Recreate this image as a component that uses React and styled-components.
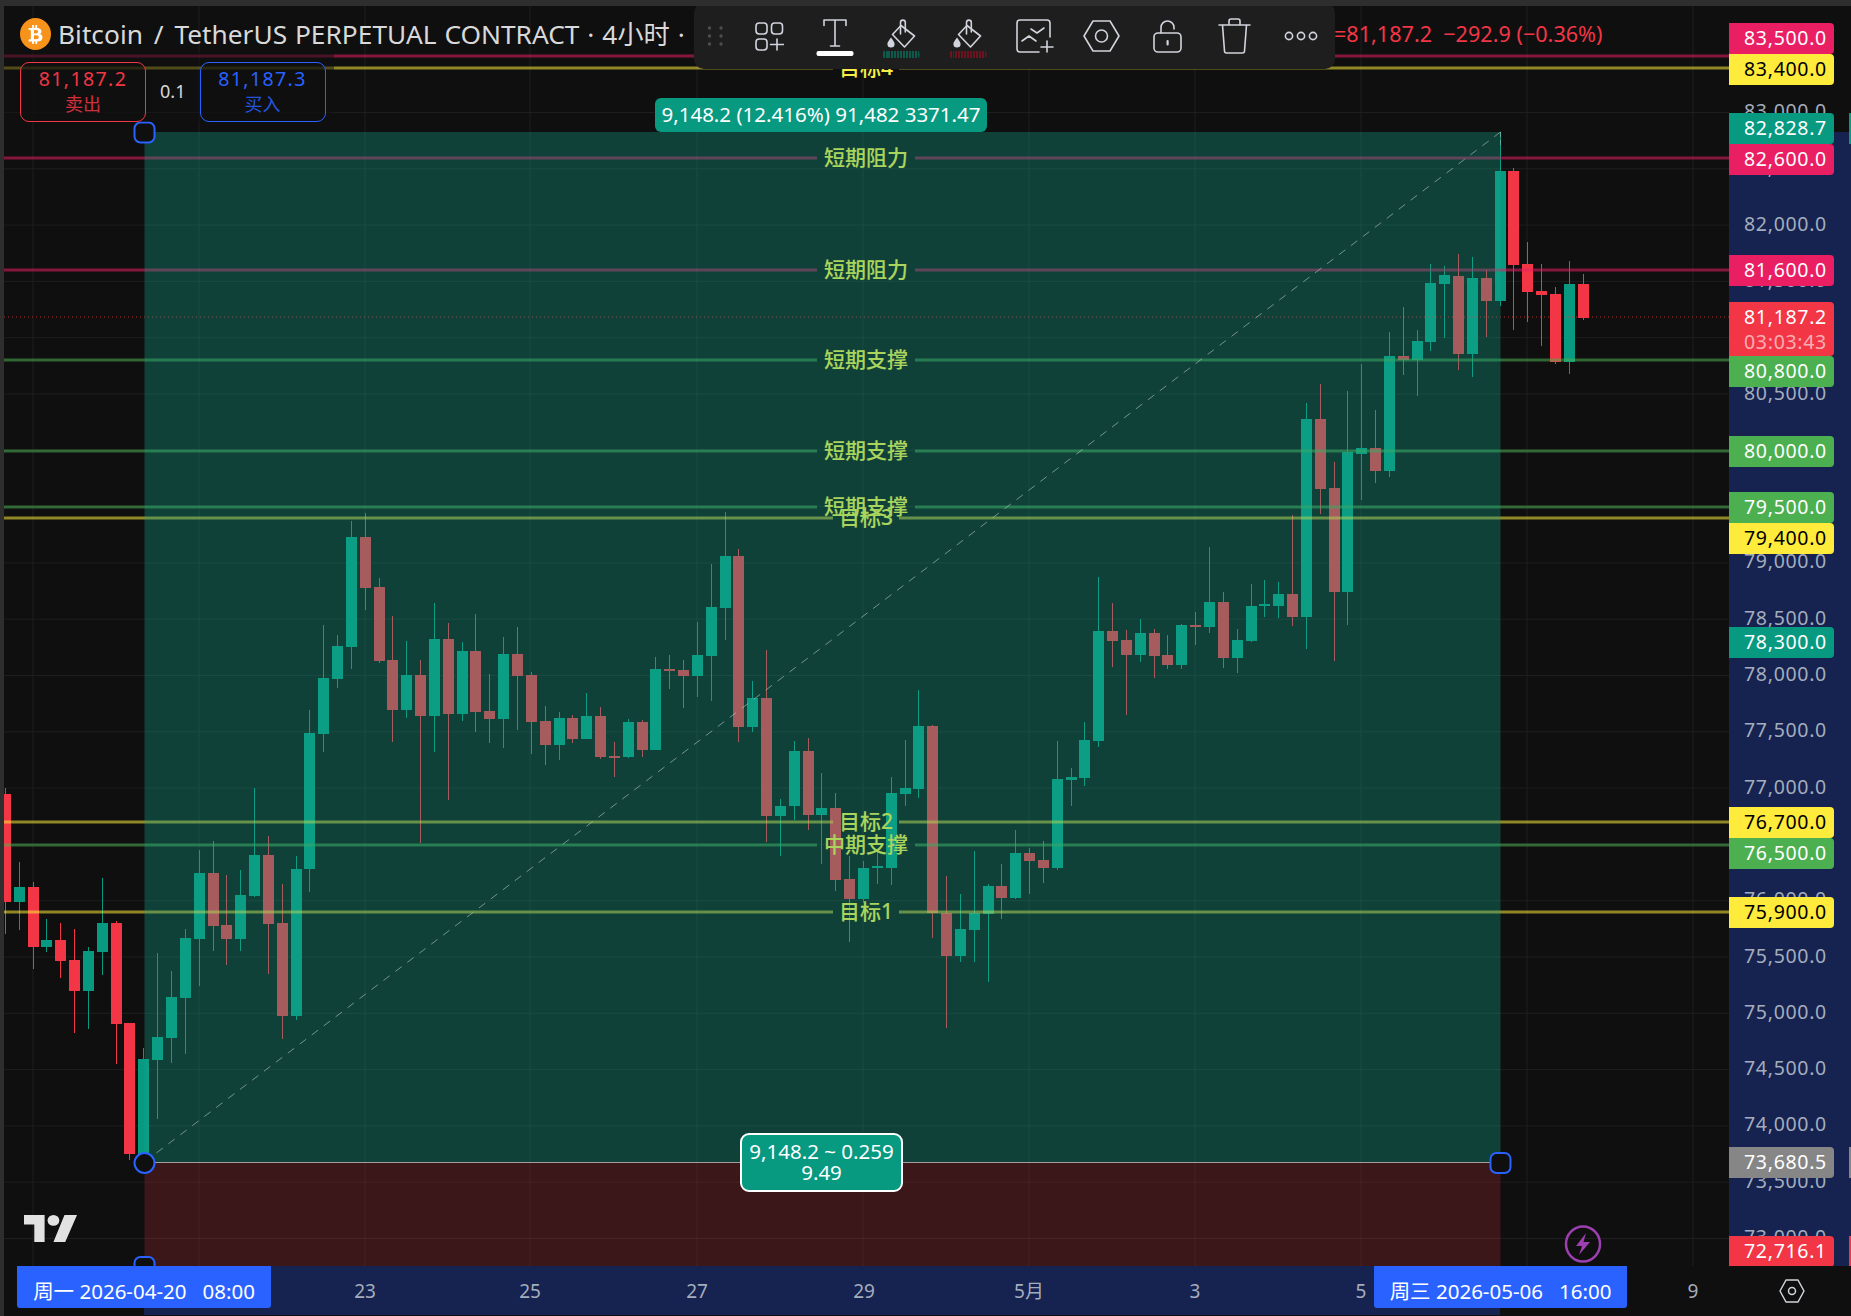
import React from "react";
import styled, { createGlobalStyle } from "styled-components";
import { FaBtc } from "react-icons/fa";

const FONT = `"Noto Sans", "Noto Sans CJK SC", sans-serif`;

const Global = createGlobalStyle`
  html, body { margin: 0; padding: 0; background: #2e2e2e; }
  body { font-family: ${FONT}; overflow: hidden; }
`;

const Screen = styled.div`
  width: 1851px;
  height: 1316px;
  padding: 6px 0 0 4px;
  box-sizing: border-box;
  background: #2e2e2e;
  display: grid;
  grid-template-columns: 1725px 122px;
  grid-template-rows: 1260px 50px;
  overflow: hidden;
  position: relative;
`;

const ChartPane = styled.div`
  position: relative;
  background: #0f0f0f;
  overflow: hidden;
`;

const ChartSvg = styled.svg`
  display: block;
  width: 1725px;
  height: 1260px;
`;

/* legend */
const Legend = styled.div`
  position: absolute;
  left: 0;
  top: 0;
  display: flex;
  flex-direction: column;
`;

const TitleRow = styled.div`
  display: flex;
  align-items: center;
  height: 32px;
  margin-top: 12px;
  padding-left: 16px;
  white-space: nowrap;
`;

const CoinLogo = styled.span`
  width: 31px;
  height: 32px;
  border-radius: 50%;
  background: #f7931a;
  color: #fff;
  display: flex;
  align-items: center;
  justify-content: center;
  font-size: 19px;
  flex: none;
`;

const Title = styled.span`
  margin-left: 7px;
  font-size: 26.3px;
  line-height: 32px;
  word-spacing: 1px;
  color: #d9d9d9;
  flex: none;
`;

const Slash = styled.span`
  margin: 0 3px;
`;

const Values = styled.span`
  position: absolute;
  left: 1330px;
  font-size: 21.6px;
  line-height: 32px;
  color: #f23645;
  white-space: pre;
`;

const TradeRow = styled.div`
  display: flex;
  align-items: flex-start;
  width: 330px;
  box-sizing: border-box;
  padding: 12px 0 0 16px;
  background: rgba(15, 15, 15, 0.5);
`;

const TradeBox = styled.div`
  width: 126px;
  height: 60px;
  box-sizing: border-box;
  border: 1px solid ${(p) => p.$color};
  border-radius: 9px;
  color: ${(p) => p.$color};
  text-align: center;
  flex: none;
  background: rgba(15, 15, 15, 0.6);
`;

const TradePrice = styled.div`
  font-size: 19.5px;
  line-height: 26px;
  letter-spacing: 1.4px;
  margin-top: 3px;
`;

const TradeSide = styled.div`
  font-size: 18px;
  line-height: 25px;
  opacity: 0.85;
`;

const Spread = styled.div`
  width: 53.5px;
  height: 60px;
  line-height: 58px;
  text-align: center;
  font-size: 18px;
  color: #d8d8d8;
  flex: none;
`;

/* floating toolbar */
const Toolbar = styled.div`
  position: absolute;
  left: 690px;
  top: -3px;
  width: 641px;
  height: 66px;
  display: flex;
  align-items: stretch;
  background: #1e1e1e;
  border-radius: 10px;
  color: #d1d4dc;
`;

const DragHandle = styled.div`
  width: 42px;
  flex: none;
  display: flex;
  align-items: center;
  justify-content: center;
  color: #4e4e4e;
`;

const ToolButton = styled.div`
  width: ${(p) => p.$w || 66}px;
  flex: none;
  position: relative;
  display: flex;
  align-items: center;
  justify-content: center;
`;

const IconLift = styled.div`
  display: flex;
  transform: translateY(${(p) => p.$lift || 0}px);
`;

const Swatch = styled.div`
  position: absolute;
  left: 50%;
  top: 48px;
  width: 37px;
  height: ${(p) => (p.$solid ? 5 : 7)}px;
  transform: translateX(-50%);
  border-radius: 2px;
  background: ${(p) =>
    p.$solid
      ? p.$color
      : `repeating-linear-gradient(90deg, ${p.$color} 0 2px, #1e1e1e 2px 3px)`};
`;

const Ic = { fill: "none", stroke: "currentColor", strokeWidth: 1.6, strokeLinecap: "round", strokeLinejoin: "round" };

const DragIcon = () => (
  <svg width="15" height="20" viewBox="0 0 15 20" fill="currentColor">
    {[1.5, 13].map((x) => [2, 10, 18].map((y) => <circle key={`${x}${y}`} cx={x} cy={y} r="1.7" />))}
  </svg>
);
const AddGrid = () => (
  <svg width="29" height="29" viewBox="0 0 29 29" {...Ic}>
    <rect x="1" y="1" width="11" height="11" rx="3.2" />
    <rect x="16.5" y="1" width="11" height="11" rx="3.2" />
    <rect x="1" y="17" width="11" height="11" rx="3.2" />
    <path d="M15.5 22.5h13M22 17v11" />
  </svg>
);
const TextTool = () => (
  <svg width="24" height="28" viewBox="0 0 24 28" {...Ic}>
    <path d="M1 6.500V1h22v5.500M12 1v26M7.500 27h9" />
  </svg>
);
const Bucket = () => (
  <svg width="29" height="29" viewBox="0 0 29 29" {...Ic}>
    <path d="M14 6.500 27.500 17 17.500 28 5.500 15.500Z" />
    <path d="M13.500 15V3.500a2.400 2.400 0 0 1 4.800 0V13" />
    <path d="M4 18.500C1.500 22 .4 23.500 .4 25a3.600 3.600 0 0 0 7.200 0C7.600 23.500 6.500 22 4 18.500Z" fill="currentColor" stroke="none" />
  </svg>
);
const TemplateAdd = () => (
  <svg width="38" height="34" viewBox="0 0 38 34" {...Ic}>
    <path d="M34 18V4a3 3 0 0 0-3-3H4a3 3 0 0 0-3 3v26a3 3 0 0 0 3 3h19" />
    <path d="M15 10l6 4 7-5M6 22l7-5 7 5M25 28h12M31 22v11" />
  </svg>
);
const Hexagon = () => (
  <svg width="37" height="32" viewBox="0 0 37 32" {...Ic}>
    <path d="M10 1h17l9 15-9 15H10L1 16Z" />
    <circle cx="18.500" cy="16" r="6" />
  </svg>
);
const LockOpen = () => (
  <svg width="29" height="33" viewBox="0 0 29 33" {...Ic}>
    <rect x="1" y="13" width="27" height="19" rx="4" />
    <path d="M8 13V7.500a6.500 6.500 0 0 1 13 0V9" />
    <rect x="13.500" y="20" width="2.200" height="5.500" rx="1" fill="currentColor" stroke="none" />
  </svg>
);
const Trash = () => (
  <svg width="33" height="36" viewBox="0 0 33 36" {...Ic}>
    <path d="M1 7h31M11 7V3a2 2 0 0 1 2-2h7a2 2 0 0 1 2 2v4M4.500 7l2 26a2 2 0 0 0 2 2h16a2 2 0 0 0 2-2l2-26" />
  </svg>
);
const Dots = () => (
  <svg width="34" height="10" viewBox="0 0 34 10" {...Ic}>
    <circle cx="5" cy="5" r="3.600" />
    <circle cx="17" cy="5" r="3.600" />
    <circle cx="29" cy="5" r="3.600" />
  </svg>
);

/* measure labels */
const MeasureTag = styled.div`
  position: absolute;
  left: 651px;
  top: 92px;
  width: 332px;
  height: 34px;
  line-height: 32px;
  text-align: center;
  background: #089981;
  border-radius: 6px;
  color: #fff;
  font-size: 20.5px;
  white-space: nowrap;
`;

const StatTag = styled.div`
  position: absolute;
  left: 736px;
  top: 1127px;
  width: 163px;
  height: 59px;
  box-sizing: border-box;
  background: #089981;
  border: 2px solid #fff;
  border-radius: 9px;
  color: #fff;
  font-size: 20.5px;
  line-height: 21px;
  text-align: center;
  padding-top: 6px;
  white-space: nowrap;
`;

const Bolt = styled.svg`
  position: absolute;
  left: 1557px;
  top: 1214px;
`;

const Wordmark = styled.svg`
  position: absolute;
  left: 20px;
  top: 1209px;
`;

/* price axis */
const PriceAxis = styled.div`
  position: relative;
  background: #0f0f0f;
  overflow: hidden;
`;

const AxisBand = styled.div`
  position: absolute;
  left: 0;
  right: 0;
  top: 126px;
  bottom: 0;
  background: #16224f;
`;

const PriceTick = styled.div`
  position: absolute;
  left: 15px;
  font-size: 19.5px;
  line-height: 26px;
  letter-spacing: 0.7px;
  color: #a3adbd;
  white-space: nowrap;
`;

const PriceTag = styled.div`
  position: absolute;
  left: 0;
  width: 105px;
  padding: ${(p) => (p.$two ? "2px" : "0")} 0 0 15px;
  box-sizing: border-box;
  height: ${(p) => (p.$two ? 54 : 31)}px;
  border-radius: 0 4px 4px 0;
  background: ${(p) => p.$bg};
  color: ${(p) => p.$fg || "#fff"};
  font-size: 19.5px;
  line-height: ${(p) => (p.$two ? 25 : 29)}px;
  letter-spacing: 0.7px;
  white-space: nowrap;
  ${(p) =>
    p.$edge
      ? `&::after { content: ""; position: absolute; left: 120px; top: 0; bottom: 0; width: 4px; background: ${p.$bg}; }`
      : ""}
`;

const TagSub = styled.div`
  color: rgba(255, 255, 255, 0.6);
`;

/* time axis */
const TimeAxis = styled.div`
  position: relative;
  background: #0f0f0f;
  height: 50px;
  overflow: hidden;
`;

const TimeBand = styled.div`
  position: absolute;
  left: 140px;
  width: 1356px;
  top: 0;
  height: 49px;
  background: #16224f;
`;

const TimeTick = styled.div`
  position: absolute;
  top: 0;
  width: 60px;
  margin-left: -30px;
  text-align: center;
  font-size: 19px;
  line-height: 50px;
  color: #a3adbd;
`;

const DateTag = styled.div`
  position: absolute;
  top: 0;
  width: ${(p) => p.$w}px;
  height: 42px;
  line-height: 50px;
  text-align: center;
  background: #2962ff;
  border-radius: 0 0 3px 3px;
  color: #fff;
  font-size: 20.5px;
  white-space: pre;
`;

const Corner = styled.div`
  background: #0f0f0f;
  display: flex;
  align-items: center;
  color: #d1d4dc;
  padding-left: 50px;
`;

/* data: colour, body top, body bottom, wick top, wick bottom (px on the page) */
const C = [
  ["r",794,902,788,934],["g",887,902,862,930],["r",887,947,882,969],["g",940,947,919,952],["r",940,961,923,978],
  ["r",960,991,929,1033],["g",951,991,947,1029],["g",923,952,878,975],["r",923,1024,921,1064],["r",1023,1154,1023,1160],
  ["g",1059,1160,1048,1162],["g",1037,1060,953,1119],["g",997,1038,971,1063],["g",938,998,929,1054],["g",873,939,850,986],
  ["r",873,926,841,951],["r",925,939,875,965],["g",895,939,870,951],["g",855,896,788,897],["r",855,924,836,974],
  ["r",923,1016,884,1039],["g",869,1016,856,1020],["g",733,869,710,892],["g",678,734,625,752],["g",646,679,635,688],
  ["g",537,647,521,669],["r",537,588,513,610],["r",587,661,578,663],["r",660,710,616,742],["g",675,710,641,718],
  ["r",675,716,660,843],["g",639,716,603,752],["r",639,714,623,800],["g",651,714,642,721],["r",651,712,614,732],
  ["r",711,719,674,743],["g",654,719,637,748],["r",654,676,627,730],["r",675,722,672,754],["r",721,745,706,765],
  ["g",718,745,712,760],["r",718,739,715,743],["g",716,739,693,739],["r",716,757,707,759],["r",756,758,742,777],
  ["g",722,757,719,758],["r",722,750,720,757],["g",669,750,657,750],["r",669,671,655,689],["r",670,676,660,708],
  ["g",655,676,622,697],["g",607,656,564,701],["g",556,608,512,640],["r",556,727,549,742],["g",698,727,681,732],
  ["r",698,816,650,842],["g",806,816,799,856],["g",751,806,741,820],["r",751,815,738,830],["g",808,815,773,864],
  ["r",808,880,793,891],["r",879,899,856,942],["g",868,899,861,903],["g",866,868,851,884],["g",793,868,777,885],
  ["g",788,794,740,806],["g",726,789,690,798],["r",726,913,725,938],["r",913,956,876,1028],["g",929,956,894,962],
  ["g",913,930,851,962],["g",886,914,884,982],["r",886,898,864,919],["g",853,898,830,899],["r",853,861,848,894],
  ["r",860,868,841,883],["g",779,868,741,870],["g",777,780,768,806],["g",740,778,722,786],["g",631,741,577,747],
  ["r",631,641,603,667],["r",640,655,630,715],["g",633,655,619,662],["r",633,656,629,678],["r",655,665,635,669],
  ["g",625,665,624,669],["r",625,627,612,645],["g",602,627,547,633],["r",602,658,592,668],["g",640,658,629,673],
  ["g",606,641,584,642],["g",604,606,580,617],["g",594,606,582,618],["r",594,617,515,626],["g",419,617,403,649],
  ["r",419,489,384,514],["r",488,592,462,661],["g",452,592,391,625],["g",448,454,364,500],["r",448,471,410,483],
  ["g",356,471,332,477],["r",356,360,307,375],["g",341,360,330,396],["g",283,342,264,351],["g",275,284,266,338],
  ["r",276,354,254,370],["g",278,354,257,377],["r",278,301,270,337],["g",171,301,132,306],["r",171,265,168,330],
  ["r",264,292,242,322],["r",291,295,264,346],["r",294,362,287,364],["g",284,362,261,374],["r",284,318,274,320],
];

const LINES = [
  { y: 56, c: "#e91e63", t: "短期阻力" },
  { y: 68, c: "#ffeb3b", t: "目标4", short: true },
  { y: 158, c: "#e91e63", t: "短期阻力" },
  { y: 270, c: "#e91e63", t: "短期阻力" },
  { y: 360, c: "#4caf50", t: "短期支撑" },
  { y: 451, c: "#4caf50", t: "短期支撑" },
  { y: 507, c: "#4caf50", t: "短期支撑" },
  { y: 518, c: "#ffeb3b", t: "目标3", short: true },
  { y: 822, c: "#ffeb3b", t: "目标2", short: true },
  { y: 845, c: "#4caf50", t: "中期支撑" },
  { y: 912, c: "#ffeb3b", t: "目标1", short: true },
];

const GRID_X = [33, 199, 365, 530, 697, 863, 1029, 1195, 1361, 1527, 1693];
const gridY = (k) => 112.5 + 56.3 * k;

const TICKS = ["83,000.0","82,500.0","82,000.0","81,500.0","81,000.0","80,500.0","80,000.0","79,500.0","79,000.0","78,500.0","78,000.0","77,500.0","77,000.0","76,500.0","76,000.0","75,500.0","75,000.0","74,500.0","74,000.0","73,500.0","73,000.0"];

const TAGS = [
  { p: "83,500.0", top: 23, bg: "#e91e63" },
  { p: "83,400.0", top: 54, bg: "#ffeb3b", fg: "#000" },
  { p: "82,828.7", top: 113, bg: "#089981", edge: true },
  { p: "82,600.0", top: 144, bg: "#e91e63" },
  { p: "81,600.0", top: 255, bg: "#e91e63" },
  { p: "80,800.0", top: 356, bg: "#4caf50" },
  { p: "80,000.0", top: 436, bg: "#4caf50" },
  { p: "79,500.0", top: 492, bg: "#4caf50" },
  { p: "79,400.0", top: 523, bg: "#ffeb3b", fg: "#000" },
  { p: "78,300.0", top: 627, bg: "#089981" },
  { p: "76,700.0", top: 807, bg: "#ffeb3b", fg: "#000" },
  { p: "76,500.0", top: 838, bg: "#4caf50" },
  { p: "75,900.0", top: 897, bg: "#ffeb3b", fg: "#000" },
  { p: "73,680.5", top: 1147, bg: "#868686", edge: true },
  { p: "72,716.1", top: 1236, bg: "#f23645", edge: true },
];

const TIME = [["23",365],["25",530],["27",697],["29",864],["5月",1029],["3",1195],["5",1361],["9",1693]];

const Chart = () => (
  <ChartSvg viewBox="4 6 1725 1260">
    {GRID_X.map((x) => (
      <line key={x} x1={x} x2={x} y1="6" y2="1266" stroke="#1e1e1e" />
    ))}
    {TICKS.map((_, k) => (
      <line key={k} x1="4" x2="1729" y1={gridY(k)} y2={gridY(k)} stroke="#1e1e1e" />
    ))}
    {C.map(([c, bt, bb, wt, wb], i) => {
      const x = 5.4 + 13.84 * i;
      const col = c === "r" ? "#f23645" : "#089981";
      return (
        <g key={i} fill={col} shapeRendering="crispEdges">
          <rect x={x - 0.5} y={wt} width="1" height={wb - wt} />
          <rect x={x - 5.5} y={bt} width="11" height={bb - bt} />
        </g>
      );
    })}
    <line x1="4" x2="1729" y1="317" y2="317" stroke="#f23645" strokeOpacity="0.7" strokeDasharray="1 3" />
    {LINES.map((l) => {
      const gap = l.short ? [833, 899] : [817, 915];
      return (
        <g key={l.y}>
          <line x1="4" x2={gap[0]} y1={l.y} y2={l.y} stroke={l.c} strokeOpacity="0.55" strokeWidth="3" />
          <line x1={gap[1]} x2="1729" y1={l.y} y2={l.y} stroke={l.c} strokeOpacity="0.55" strokeWidth="3" />
          <text x="866" y={l.y + 7} textAnchor="middle" fontSize="21" fontWeight="500" fill="#f6ee45" fontFamily={FONT}>
            {l.t}
          </text>
        </g>
      );
    })}
    <rect x="144.500" y="132" width="1356" height="1030.500" fill="rgb(21,165,142)" fillOpacity="0.34" />
    <rect x="144.500" y="1162.500" width="1356" height="104" fill="#f23645" fillOpacity="0.2" />
    <line x1="144.500" x2="1500.500" y1="1162.500" y2="1162.500" stroke="#a0a0a0" strokeWidth="1.200" />
    <line x1="144.500" y1="1162" x2="1500.500" y2="132" stroke="#b9c7c3" strokeOpacity="0.6" strokeDasharray="8 7" />
    <line x1="1500.500" y1="132" x2="1500.500" y2="146" stroke="#b9c7c3" strokeOpacity="0.5" strokeDasharray="5 3" />
    <rect x="134.500" y="122.500" width="20" height="20" rx="6" fill="#0f0f0f" stroke="#2962ff" strokeWidth="2" />
    <circle cx="144.500" cy="1163" r="10" fill="#0f0f0f" stroke="#2962ff" strokeWidth="2" />
    <rect x="1490.500" y="1153" width="20" height="20" rx="6" fill="#0f0f0f" stroke="#2962ff" strokeWidth="2" />
    <rect x="134.500" y="1257" width="20" height="20" rx="6" fill="#0f0f0f" stroke="#2962ff" strokeWidth="2" />
  </ChartSvg>
);

export default function App() {
  return (
    <>
      <Global />
      <Screen>
        <ChartPane>
          <Chart />
          <Legend>
            <TitleRow>
              <CoinLogo>
                <FaBtc />
              </CoinLogo>
              <Title>
                Bitcoin <Slash>/</Slash> TetherUS PERPETUAL CONTRACT · 4小时 ·
              </Title>
              <Values>{"=81,187.2  −292.9 (−0.36%)"}</Values>
            </TitleRow>
            <TradeRow>
              <TradeBox $color="#f23645">
                <TradePrice>81,187.2</TradePrice>
                <TradeSide>卖出</TradeSide>
              </TradeBox>
              <Spread>0.1</Spread>
              <TradeBox $color="#2962ff">
                <TradePrice>81,187.3</TradePrice>
                <TradeSide>买入</TradeSide>
              </TradeBox>
            </TradeRow>
          </Legend>
          <Toolbar>
            <DragHandle>
              <DragIcon />
            </DragHandle>
            <ToolButton>
              <AddGrid />
            </ToolButton>
            <ToolButton>
              <IconLift $lift={-3}>
                <TextTool />
              </IconLift>
              <Swatch $color="#fff" $solid />
            </ToolButton>
            <ToolButton>
              <IconLift $lift={-3}>
                <Bucket />
              </IconLift>
              <Swatch $color="#0c5a4c" />
            </ToolButton>
            <ToolButton $w={67}>
              <IconLift $lift={-3}>
                <Bucket />
              </IconLift>
              <Swatch $color="#6e1220" />
            </ToolButton>
            <ToolButton $w={68}>
              <TemplateAdd />
            </ToolButton>
            <ToolButton $w={65}>
              <Hexagon />
            </ToolButton>
            <ToolButton $w={67}>
              <LockOpen />
            </ToolButton>
            <ToolButton>
              <Trash />
            </ToolButton>
            <ToolButton $w={67}>
              <Dots />
            </ToolButton>
          </Toolbar>
          <MeasureTag>9,148.2 (12.416%) 91,482 3371.47</MeasureTag>
          <StatTag>
            9,148.2 ~ 0.259
            <br />
            9.49
          </StatTag>
          <Wordmark width="53" height="27" viewBox="0 0 36 20" fill="#e2e2e2" preserveAspectRatio="none">
            <path d="M14 20H7V7H0V0h14v20ZM28 20h-8l7.500-20H36L28 20Z" />
            <circle cx="20" cy="4" r="4" />
          </Wordmark>
          <Bolt width="44" height="48" viewBox="0 0 44 48">
            <ellipse cx="22" cy="24" rx="17" ry="17.500" fill="none" stroke="#9c3fb0" strokeWidth="2.500" />
            <path d="M25 13 15 26h6l-3 9 11-13h-6.500L25 13Z" fill="#9c3fb0" />
          </Bolt>
        </ChartPane>
        <PriceAxis>
          <AxisBand />
          {TICKS.map((t, k) => (
            <PriceTick key={t} style={{ top: gridY(k) - 6 - 14.5 }}>
              {t}
            </PriceTick>
          ))}
          {TAGS.map((t) => (
            <PriceTag key={t.p} $bg={t.bg} $fg={t.fg} $edge={t.edge} style={{ top: t.top - 6 }}>
              {t.p}
            </PriceTag>
          ))}
          <PriceTag $bg="#f23645" $two style={{ top: 296 }}>
            81,187.2
            <TagSub>03:03:43</TagSub>
          </PriceTag>
        </PriceAxis>
        <TimeAxis>
          <TimeBand />
          {TIME.map(([t, x]) => (
            <TimeTick key={t} style={{ left: x - 4 }}>
              {t}
            </TimeTick>
          ))}
          <DateTag $w={254} style={{ left: 13 }}>
            {"周一 2026-04-20   08:00"}
          </DateTag>
          <DateTag $w={253} style={{ left: 1370 }}>
            {"周三 2026-05-06   16:00"}
          </DateTag>
        </TimeAxis>
        <Corner>
          <svg width="26" height="26" viewBox="0 0 26 26" fill="none" stroke="currentColor" strokeWidth="1.500" strokeLinejoin="round">
            <path d="M7 2h12l6 11-6 11H7L1 13Z" />
            <circle cx="13" cy="13" r="3.500" />
          </svg>
        </Corner>
      </Screen>
    </>
  );
}
